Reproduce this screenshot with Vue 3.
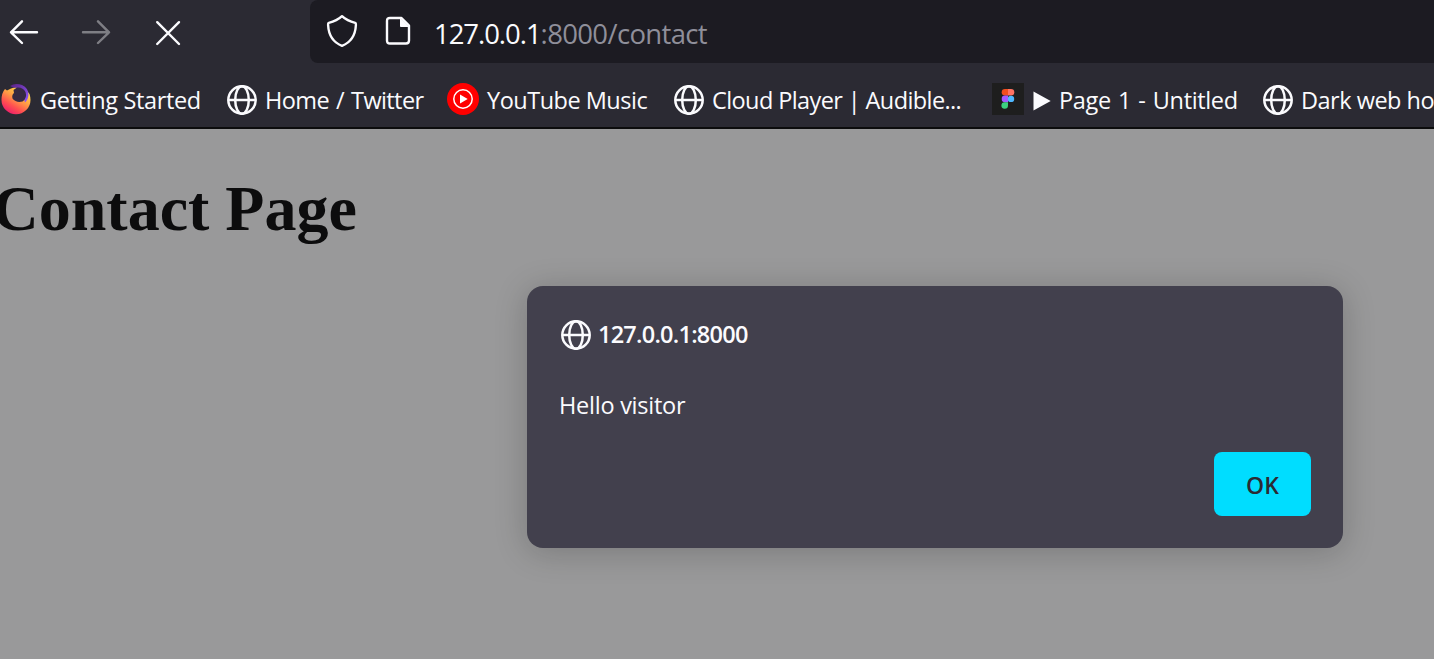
<script setup>
const bookmarks = [
  { icon: 'firefox', label: 'Getting Started', cls: 'started' },
  { icon: 'globe', label: 'Home / Twitter', cls: 'twitter' },
  { icon: 'music', label: 'YouTube Music', cls: 'music' },
  { icon: 'globe', label: 'Cloud Player | Audible...', cls: 'cloud' },
  { icon: 'figma', label: 'Page 1 - Untitled', cls: 'figma' },
  { icon: 'globe', label: 'Dark web ho', cls: 'dark' },
]
</script>

<template>
  <div class="window">
    <header class="chrome">
      <div class="toolbar">
        <nav class="nav">
          <svg width="32" height="32" viewBox="0 0 32 32" class="line"><path d="M29 16.300H3M14 5.300L3 16.300L14 27" /></svg>
          <svg width="32" height="32" viewBox="0 0 32 32" class="line dim"><path d="M3 16.300H29M18 5.300L29 16.300L18 27" /></svg>
          <svg width="32" height="32" viewBox="0 0 32 32" class="line"><path d="M5.200 6.200L27 28M27 6.200L5.200 28" /></svg>
        </nav>
        <div class="urlbar">
          <svg width="32" height="34" viewBox="0 0 32 34" class="line shield"><path d="M16 2.200C12.500 5.500 7 7.900 2.800 8.900C1.900 9.200 2 10 2.100 11C2.600 21 7.500 28.500 16 31.800C24.500 28.500 29.400 21 29.900 11C30 10 30.100 9.200 29.200 8.900C25 7.900 19.500 5.500 16 2.200Z" /></svg>
          <svg width="26" height="30" viewBox="0 0 26 30" class="line page-icon"><path d="M5 2H16.500L24 9.500V24.500Q24 27.500 21 27.500H5Q2 27.500 2 24.500V5Q2 2 5 2Z" /><path class="fold" d="M15.500 2V10.500H24Z" /></svg>
          <div class="url"><span class="host">127.0.0.1</span><span class="rest">:8000/contact</span></div>
        </div>
      </div>
      <div class="bookmarks">
        <div v-for="b in bookmarks" :key="b.label" class="bookmark">
          <svg v-if="b.icon === 'globe'" width="32" height="32" viewBox="0 0 32 32" class="globe"><circle cx="16" cy="16" r="13.700" /><ellipse cx="16" cy="16" rx="6.800" ry="13.700" /><path d="M2 16H30" /></svg>
          <svg v-else-if="b.icon === 'music'" width="32" height="32" viewBox="0 0 32 32"><circle cx="16" cy="16" r="16" fill="#f00" /><circle cx="16" cy="16" r="9.200" fill="none" stroke="#fff" stroke-width="1.500" /><path d="M13 11.500L20.700 16L13 20.500Z" fill="#fff" /></svg>
          <svg v-else-if="b.icon === 'figma'" width="32" height="32" viewBox="0 0 32 32">
            <rect width="32" height="32" fill="#1e1e1e" />
            <path d="M16 6H13A3.250 3.250 0 0 0 13 12.600H16Z" fill="#f24e1e" />
            <path d="M16 6H19A3.250 3.250 0 0 1 19 12.600H16Z" fill="#ff7262" />
            <path d="M16 12.600H13A3.250 3.250 0 0 0 13 19.200H16Z" fill="#a259ff" />
            <circle cx="19" cy="15.900" r="3.200" fill="#4fb8ff" />
            <path d="M16 19.200H13A3.300 3.300 0 1 0 16 22.500Z" fill="#3ccf7f" />
          </svg>
          <svg v-else width="32" height="32" viewBox="0 0 32 32">
            <defs>
              <linearGradient id="flame" x1="0.850" y1="0.150" x2="0.300" y2="1"><stop offset="0" stop-color="#ffe04a" /><stop offset="0.400" stop-color="#ff9a45" /><stop offset="0.700" stop-color="#ff5050" /><stop offset="1" stop-color="#ec1d6b" /></linearGradient>
              <linearGradient id="violet" x1="0" y1="0" x2="1" y2="1"><stop offset="0" stop-color="#592080" /><stop offset="1" stop-color="#9059ff" /></linearGradient>
            </defs>
            <path d="M5 6L7 7.500L11 5.500L16 4L27 8L29.500 11Q30.500 14 30.500 17A14.500 14.300 0 0 1 1.500 17Q1.500 10 5 6Z" fill="url(#flame)" />
            <path d="M10 3Q15-0.500 22 2Q28.500 5 28.500 12Q28 17 25 19.500L23 12L18 5L13 4.500Z" fill="url(#violet)" />
            <path d="M17 4.500Q23 4 25.500 9Q27.500 15 22.500 18.500Q16 20 12.500 15.500Q11.500 12 14 10L13.500 7Z" fill="#352a42" />
          </svg>
          <svg v-if="b.icon === 'figma'" class="play" width="18" height="20" viewBox="0 0 18 20"><path d="M0.500 0.500L17.700 10L0.500 19.500Z" fill="#fbfbfe" /></svg>
          <span :class="['label', b.cls]">{{ b.label }}</span>
        </div>
      </div>
    </header>
    <main class="content">
      <h1>Contact Page</h1>
      <section class="dialog">
        <div class="origin">
          <svg width="32" height="32" viewBox="0 0 32 32" class="globe"><circle cx="16" cy="16" r="13.700" /><ellipse cx="16" cy="16" rx="6.800" ry="13.700" /><path d="M2 16H30" /></svg>
          <span class="origin-text">127.0.0.1:8000</span>
        </div>
        <p class="message">Hello visitor</p>
        <button class="ok">OK</button>
      </section>
    </main>
  </div>
</template>

<style>
body { margin: 0; overflow: hidden; }
</style>

<style scoped>
.window { width: 1434px; height: 659px; overflow: hidden; display: flex; flex-direction: column; background: #99999a; font-family: "Open Sans", "Noto Sans", sans-serif; color: #fbfbfe; }
.chrome { flex: none; height: 129px; box-sizing: border-box; background: #2b2a33; border-bottom: 2px solid #0c0c0d; }
svg { flex: none; display: block; }
.line { fill: none; stroke: #fbfbfe; stroke-width: 2.4; stroke-linecap: round; stroke-linejoin: round; }
.dim { opacity: 0.4; }
.toolbar { display: flex; height: 63px; }
.nav { width: 310px; box-sizing: border-box; display: flex; gap: 40px; padding: 16px 0 0 8px; }
.urlbar { flex: 1; display: flex; align-items: flex-start; background: #1c1b22; border-radius: 8px 0 0 8px; }
.shield { margin: 14px 0 0 16px; }
.page-icon { margin: 16px 0 0 27px; }
.fold { fill: #fbfbfe; stroke-width: 1; }
.url { margin: 14px 0 0 23px; font-size: 27.5px; line-height: 40px; white-space: nowrap; }
.host { letter-spacing: -1.05px; }
.rest { color: #8f8f9a; letter-spacing: -0.65px; }
.bookmarks { display: grid; grid-template-columns: 226px 221px 226px 319px 270px 172px; padding-top: 20px; }
.bookmark { display: flex; align-items: flex-start; height: 34px; }
.bookmark .globe { margin-top: 1px; }
.play { margin: 8px 0 0 9px; }
.label { margin-left: 7px; font-size: 23.5px; line-height: 35px; white-space: nowrap; letter-spacing: -0.5px; }
.started { margin-left: 8px; letter-spacing: -0.35px; }
.twitter { letter-spacing: -0.6px; word-spacing: 1.5px; }
.music { margin-left: 8px; }
.cloud { letter-spacing: -0.6px; }
.figma { margin-left: 8px; letter-spacing: -0.35px; word-spacing: 1.5px; }
.globe { fill: none; stroke: #fbfbfe; stroke-width: 2.5; }
.content { flex: 1; }
h1 { margin: 43px 0 0; text-indent: -7.5px; font: bold 64px/74px "Liberation Serif", serif; color: #0c0c0d; white-space: nowrap; }
.dialog { width: 816px; height: 262px; box-sizing: border-box; margin: 40px 0 0 527px; padding: 33px 32px 32px; display: flex; flex-direction: column; border-radius: 16px; background: #42404d; box-shadow: 0 4px 32px rgba(12, 12, 13, 0.22); }
.origin { display: flex; align-items: flex-start; height: 32px; padding-left: 1px; }
.origin-text { margin-left: 6px; font-size: 23.5px; font-weight: 600; letter-spacing: -0.75px; line-height: 30px; }
.message { margin: 37px 0 0; font-size: 23.5px; line-height: 34px; letter-spacing: -0.25px; }
.ok { align-self: flex-end; margin-top: 30px; width: 97px; height: 64px; padding: 1px 0 0; border: 0; border-radius: 8px; background: #00ddff; color: #2b2a33; font: 600 23px/32px "Open Sans", sans-serif; }
</style>
